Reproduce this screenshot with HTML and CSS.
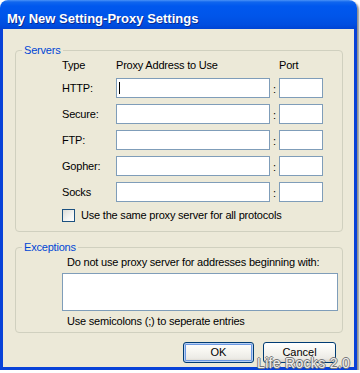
FILE: index.html
```html
<!DOCTYPE html>
<html lang="en">
<head>
    <meta charset="UTF-8">
    <title>My New Setting-Proxy Settings</title>
    <link rel="stylesheet" href="styles.css">
</head>
<body>
    <div class="window">
        <div class="titlebar">My New Setting-Proxy Settings</div>
        <div class="frame">
            <fieldset class="group servers">
                <legend>Servers</legend>
                <div class="server-grid">
                    <span class="head">Type</span>
                    <span class="head">Proxy Address to Use</span>
                    <span></span>
                    <span class="head">Port</span>

                    <label for="httpAddr">HTTP:</label>
                    <span class="caret-wrap"><input type="text" id="httpAddr"><span class="caret"></span></span>
                    <span class="colon">:</span>
                    <input type="text" id="httpPort">

                    <label for="secureAddr">Secure:</label>
                    <input type="text" id="secureAddr">
                    <span class="colon">:</span>
                    <input type="text" id="securePort">

                    <label for="ftpAddr">FTP:</label>
                    <input type="text" id="ftpAddr">
                    <span class="colon">:</span>
                    <input type="text" id="ftpPort">

                    <label for="gopherAddr">Gopher:</label>
                    <input type="text" id="gopherAddr">
                    <span class="colon">:</span>
                    <input type="text" id="gopherPort">

                    <label for="socksAddr">Socks</label>
                    <input type="text" id="socksAddr">
                    <span class="colon">:</span>
                    <input type="text" id="socksPort">
                </div>
                <div class="check-row">
                    <span class="checkbox"></span>
                    <span>Use the same proxy server for all protocols</span>
                </div>
            </fieldset>

            <fieldset class="group exceptions">
                <legend>Exceptions</legend>
                <p class="note">Do not use proxy server for addresses beginning with:</p>
                <textarea class="except-box"></textarea>
                <p class="note hint">Use semicolons (;) to seperate entries</p>
            </fieldset>

            <div class="buttons">
                <button class="btn btn-default">OK</button>
                <button class="btn btn-cancel">Cancel</button>
            </div>
        </div>
        <div class="watermark">Life Rocks 2.0</div>
    </div>
</body>
</html>
```

FILE: styles.css
```css
body {
    margin: 0;
    background-color: #ffffff;
    font-family: "Liberation Sans", Arial, sans-serif;
    font-size: 11px;
    letter-spacing: -0.2px;
    color: #000;
}
.window {
    position: relative;
    width: 357px;
    height: 370px;
    box-shadow: 2px 2px 2px rgba(0,0,0,0.45);
    border-radius: 8px 8px 0 0;
}
.titlebar {
    height: 29px;
    box-sizing: border-box;
    padding: 11px 0 0 7px;
    border-radius: 8px 8px 0 0;
    background: linear-gradient(#4a93f7 0, #1066ee 2px, #0058ee 6px, #0055ea 55%, #004ee0 85%, #0044d4 100%);
    color: #fff;
    font-weight: bold;
    font-size: 13px;
    line-height: 15px;
    letter-spacing: 0;
    text-shadow: 1px 1px 0 #0a2a90;
}
.frame {
    height: 341px;
    box-sizing: border-box;
    background-color: #ece9d8;
    border: 3px solid #0842d8;
    border-top: 0;
    padding-top: 15px;
}
.group {
    margin: 0 11px 0 12px;
    border: 1px solid #d0d0bf;
    border-radius: 4px;
    padding: 2px 0 9px 6px;
}
.group legend {
    padding: 0 2px;
    color: #0046d5;
    line-height: 13px;
}
.server-grid {
    display: grid;
    grid-template-columns: 54px 154px 9px 44px;
    grid-template-rows: 13px repeat(5, 20px);
    row-gap: 6px;
    margin-left: 40px;
    line-height: 13px;
    align-items: center;
}
.server-grid label {
    line-height: 13px;
}
input, textarea {
    box-sizing: border-box;
    border: 1px solid #7f9db9;
    background: #fff;
    margin: 0;
    padding: 0;
    height: 20px;
    width: 100%;
    font: inherit;
    outline: none;
}
.caret-wrap {
    position: relative;
    display: block;
    height: 20px;
}
.caret {
    position: absolute;
    left: 3px;
    top: 4px;
    width: 1px;
    height: 12px;
    background: #000;
}
.colon {
    text-align: center;
    padding-top: 2px;
}
.check-row {
    display: flex;
    align-items: center;
    gap: 6px;
    margin: 7px 0 0 40px;
    height: 13px;
    line-height: 13px;
}
.checkbox {
    width: 13px;
    height: 13px;
    box-sizing: border-box;
    border: 1px solid #1c5180;
    background: linear-gradient(135deg, #dcdcd7 0, #f4f4f2 60%, #ffffff 100%);
}
.exceptions {
    margin-top: 9px;
    padding-bottom: 4px;
}
.note {
    margin: 0 0 4px 45px;
    line-height: 13px;
}
.except-box {
    display: block;
    width: 276px;
    height: 38px;
    margin-left: 40px;
    resize: none;
}
.hint {
    margin-top: 4px;
    margin-bottom: 0;
}
.buttons {
    display: flex;
    justify-content: flex-end;
    gap: 9px;
    margin-top: 9px;
    padding-right: 18px;
}
.btn {
    height: 21px;
    box-sizing: border-box;
    border: 1px solid #003c74;
    border-radius: 3px;
    background: linear-gradient(#ffffff 0, #f6f5f0 45%, #ecebe6 80%, #d6d0c5 100%);
    font: inherit;
    line-height: 11px;
    color: #000;
    padding: 0;
}
.btn-default {
    width: 71px;
    box-shadow: inset 0 0 0 1px #b8d0f4, inset 0 0 0 2px #6b98e2;
}
.btn-cancel {
    width: 73px;
}
.watermark {
    position: absolute;
    right: 7px;
    top: 358px;
    font-size: 14px;
    line-height: 11px;
    letter-spacing: 0.3px;
    color: #ededed;
    text-shadow: 1px 0 0 #7a7a7a, -1px 0 0 #7a7a7a, 0 1px 0 #7a7a7a, 0 -1px 0 #7a7a7a;
}
```
